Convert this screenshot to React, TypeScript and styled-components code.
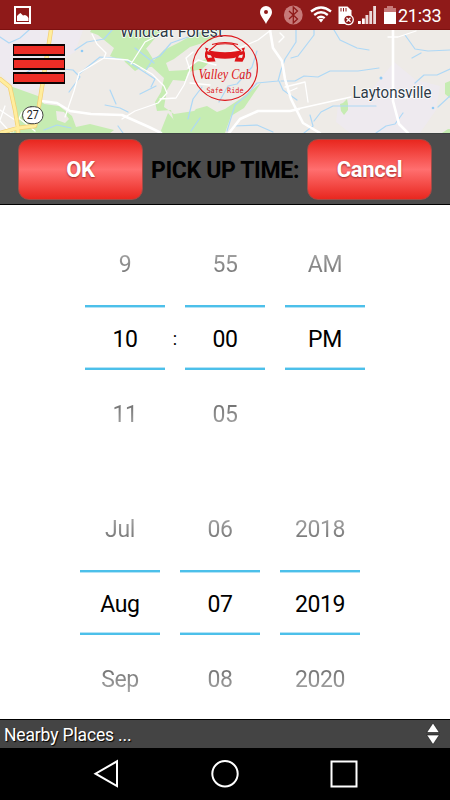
import React from 'react';
import styled, { createGlobalStyle } from 'styled-components';

const GlobalStyle = createGlobalStyle`
    * {
        box-sizing: border-box;
    }
    body {
        margin: 0;
        background: #fff;
        font-family: Roboto, "Noto Sans", sans-serif;
    }
`;

const Screen = styled.div`
    display: flex;
    flex-direction: column;
    width: 450px;
    height: 800px;
    overflow: hidden;
    background: #fff;
`;

const StatusBar = styled.div`
    display: flex;
    flex: none;
    justify-content: space-between;
    height: 30px;
    background: #8f1a19;
    border-bottom: 1px solid #7d1110;
`;

const StatusIcons = styled.div`
    display: flex;
    width: 200px;
`;

const Clock = styled.span`
    width: 52px;
    margin-left: -2px;
    color: #fff;
    font-size: 18px;
    line-height: 31px;
    letter-spacing: -0.3px;
    white-space: nowrap;
`;

const MapArea = styled.div`
    position: relative;
    flex: none;
    height: 103px;
    overflow: hidden;
    & > svg {
        display: block;
    }
`;

const MenuButton = styled.button`
    position: absolute;
    top: 14px;
    left: 13px;
    display: flex;
    flex-direction: column;
    gap: 2px;
    width: 52px;
    padding: 0;
    border: 0;
    background: none;
`;

const MenuBar = styled.span`
    height: 12px;
    background: #ee2d26;
    border: solid #0c0303;
    border-width: 2px 1px;
`;

const Logo = styled.svg`
    position: absolute;
    top: 4px;
    left: 191px;
`;

const Toolbar = styled.div`
    display: flex;
    flex: none;
    align-items: center;
    justify-content: space-between;
    height: 72px;
    padding: 0 18px;
    background: #4c4c4c;
    border-top: 1px solid #3e4242;
    border-bottom: 1px solid #000;
`;

const ToolbarButton = styled.button`
    width: 125px;
    height: 61px;
    padding: 1px 0 0;
    border: 1px solid #a34a45;
    border-radius: 11px;
    background: linear-gradient(#e9271f, #ff6f6f 50%, #e9271f);
    color: #fff;
    font: bold 22px Roboto, sans-serif;
    letter-spacing: -0.4px;
    text-shadow: 0 1px 2px rgba(90, 0, 0, 0.55);
`;

const Title = styled.h1`
    margin: 0;
    padding-top: 3px;
    color: #000;
    font-size: 23px;
    font-weight: bold;
    line-height: 30px;
    white-space: nowrap;
    letter-spacing: -0.35px;
`;

const Pickers = styled.div`
    flex: 1;
    padding-top: 21px;
`;

const PickerRow = styled.div<{ $left: number; $after?: number }>`
    display: flex;
    height: 225px;
    margin-bottom: ${p => p.$after || 0}px;
    padding-left: ${p => p.$left}px;
`;

const Wheel = styled.div`
    width: 80px;
    font-size: 23px;
    letter-spacing: -0.4px;
    text-align: center;
`;

const Option = styled.div<{ $fade: 'up' | 'down' }>`
    height: 79px;
    line-height: ${p => p.$fade === 'up' ? 77 : 89}px;
    color: transparent;
    background: ${p => p.$fade === 'up'
        ? 'linear-gradient(#fff 0, #aaa 30%, #707070 65%, #444)'
        : 'linear-gradient(#444, #707070 42%, #aaa 74%, #fff)'};
    background-clip: text;
    -webkit-background-clip: text;
`;

const Selected = styled.div`
    height: 65px;
    background: linear-gradient(#4cc0ea 2px, #b4e3f6 2px, #b4e3f6 3px, #fff 3px, #fff 62px, #b4e3f6 62px, #b4e3f6 63px, #4cc0ea 63px);
    line-height: 69px;
    color: #000;
`;

const Separator = styled.div`
    width: 20px;
    padding-top: 100px;
    font-size: 18px;
    line-height: 26px;
    text-align: center;
`;

const PlacesBar = styled.div`
    display: flex;
    flex: none;
    align-items: center;
    justify-content: space-between;
    height: 29px;
    padding: 2px 10px 0 4px;
    border-top: 1px solid #000;
    background: #444;
    color: #fff;
    font-size: 17.5px;
    letter-spacing: -0.15px;
    text-shadow: 1px 1px 1px #000;
    & > svg {
        margin-bottom: 2px;
    }
`;

const NavBar = styled.div`
    display: flex;
    flex: none;
    height: 52px;
    background: #000;
`;

interface WheelProps {
    before: string;
    value: string;
    after?: string;
}

const WheelPicker: React.FC<WheelProps> = ({ before, value, after }) => (
    <Wheel>
        <Option $fade="up">{before}</Option>
        <Selected>{value}</Selected>
        <Option $fade="down">{after}</Option>
    </Wheel>
)

const RoadMap = () => (
    <svg width="450" height="103" viewBox="0 30 450 103" fill="none" strokeLinecap="round" strokeLinejoin="round">
        <path fill="#eeebe7" d="M0 30h450v103H0z"/>
        <path fill="#eeeaf0" d="M0 30h83l-8 22-24 14-12 22-20 6L0 72z"/>
        <path fill="#eeeaef" d="M394 62l22 18 24 6-4 24-16 23h-70l-14-11 2-17 34-16z"/>
        <g fill="#c6ecb2">
            <path d="M91 30h51l-4 9 10 12 8 13-8 4-2 4-8-8-12-4-8-1-8-3 4-8-16-13-8-3z"/>
            <path d="M142 30h20l-17 20-7-7z"/>
            <path d="M128 60l22 4 14-14 16-8 14-8 12-4h14l-8 10-22 7-16 12-8 4 3 8 18-1 10-8 12-4 2 3-9 8-14 3-3 9-12-1-6 10-3 17 10 7 20-3 12 8-1 7h-30l-4-16-14 1-2-9 6-10 3-14-12-11-8-1-9 5-10-9-2-4 6-1z"/>
            <path d="M10 86l28 10 6 8 15 2 13 10 4 11 14-3 24 6-4 3H0l16-5-1-13z"/>
            <path d="M261 83l-21 16-15 10-8 3-10-6-11 3-9 10-13 1-6-7-8 20h65l6-17 13-8z"/>
            <path d="M343 103l4-4 1 5 0 6-4 5-3-4-1-7z"/>
            <path d="M445 83l5-2v17l-5-4z"/>
            <path d="M442 133l6-4h2v4z"/>
        </g>
        <path fill="#eeebe7" d="M56 111l8 1 5 7-4 4-8-3zM133 133l8-7 12 3 5 4z"/>
        <g stroke="#aed8f6" strokeWidth="1.2">
            <path d="M0 37l9 6 11-5 9-8M75 50l12-8 17-3 8-9M24 74l8-5 30 0 11 1 7 7-11 15"/>
            <path d="M79 74l11-9 10-8 14 1 12 2 12 8 17 11-4 8M146 70l7-11 7-3 11-13 20-7 30-6M135 48l19 15M105 105l15 3 8 4M110 90l6 14M140 94l16-8"/>
            <path d="M44 130l13-5 14 3M200 118l-9 13M188 119l5-20 9-12M118 126l5 7M257 51l-5 16-15 17-9 2-9 16"/>
            <path d="M296 30l0 12-11 17-4 11-3 11-21 2-11 13-11 9-8 26M314 30v5l-16 21-7 2M334 30l6 10 17 8 12 2M279 81l4 9 14 10M281 81l14 0 9-5 14 1 12-6 28 0 21-3M405 35l10 14 13 2 22-1M412 58l9-5"/>
            <path d="M415 83l9-8h13l13-6M438 107l12-11M234 126l23-1 16 7M304 133l9-7-3-11M314 121l7-9 12-6 43 0M376 133l10-7 9-2 8-11"/>
        </g>
        <g fill="#8fcaf5">
            <circle cx="82" cy="51" r="1.3"/>
            <circle cx="381" cy="78" r="1.5"/>
            <circle cx="433" cy="108" r="1.3"/>
        </g>
        <g stroke="#fff" strokeWidth="1.3">
            <path d="M65 117l9-26 5-18 25-15 2-5-9-9-5-10M104 58l24 2 24 14 12 12 3 7-9 10-23 8-13 8M131 64l14-22 16-8M160 99l16-1 8-13 6-15-4-12 7-6M190 83l20 2M188 68l10-8 18 5M0 110l15 10M0 121l11 12M5 106L0 120M22 112l-9 20M20 119l15 12"/>
            <path d="M230 52l28-12 13-10M280 33l4 4-5 5M297 109l54-12M285 87l20-5 3 20M288 92l9-4M428 94l-23 4M388 37h10l18-6"/>
        </g>
        <g stroke="#fff">
            <path strokeWidth="2.6" d="M41 101l16 2 13 8 21 3 31 1 27 12 12 6M270 30l3 18 9 13 3 18 6 20 12 24 17 10M393 30v71l6 23 9 9M229 133l11-14 18-8 32 0 9-2"/>
        </g>
        <path stroke="#f3ce72" strokeWidth="4.4" d="M51 30L39 106M0 79l10 8 5 23 3 18 0 5M39 110l-4 16-17 2-18 5"/>
        <path stroke="#ffed9d" strokeWidth="3" d="M51 30L39 106M0 79l10 8 5 23 3 18 0 5M39 110l-4 16-17 2-18 5"/>
        <rect x="22.5" y="106.7" width="20.5" height="17" rx="8.5" fill="#fff" stroke="#444" strokeWidth="1"/>
        <text x="32.7" y="119.3" fill="#222" fontSize="12" textAnchor="middle" textLength="12" lengthAdjust="spacingAndGlyphs">27</text>
        <g fill="#2e3a46" stroke="#fff" strokeWidth="1.6" paintOrder="stroke">
            <text x="120" y="37" fontSize="17" textLength="103" lengthAdjust="spacingAndGlyphs">Wildcat Forest</text>
            <text x="352.5" y="98.3" fontSize="16" textLength="79" lengthAdjust="spacingAndGlyphs">Laytonsville</text>
        </g>
    </svg>
)

const CabLogo = () => (
    <Logo width="68" height="68" viewBox="191 34 68 68" fill="none">
        <circle cx="225" cy="68" r="32.4" stroke="#dd1519" strokeWidth="1.1"/>
        <path stroke="#dd1519" strokeWidth="1.1" d="M209 51l7.500-6.500q9-1.500 17 0l7.500 6.500M212 44.500q13-4 26 0"/>
        <g fill="#dd1519">
            <path d="M209 50.500l6 1q10 1.500 20 0l6-1-2.500 6-4.500 1.500q-9 1.500-18 0l-4.500-1.500z"/>
            <path fillRule="evenodd" d="M205 47.500l3.500 1-1.500 2.500 5.500 1.500 3 9-8 .2-2.500-4.700q-.8-4 1-6.500zM207 54.500l1 3.500 4-.5-.5-2z"/>
            <path fillRule="evenodd" d="M245 47.500l-3.500 1 1.500 2.500-5.500 1.500-3 9 8 .2 2.500-4.700q.8-4-1-6.500zM243 54.500l-1 3.500-4-.5.5-2z"/>
        </g>
        <text x="198.500" y="79" fill="#dd1519" fontFamily="'Liberation Serif', serif" fontStyle="italic" fontSize="14" textLength="53" lengthAdjust="spacingAndGlyphs">Valley Cab</text>
        <text x="206.500" y="92.500" fill="#dd1519" fontFamily="'DejaVu Sans Mono', monospace" fontSize="7.500" textLength="37" lengthAdjust="spacingAndGlyphs">Safe Ride</text>
    </Logo>
)

const PictureIcon = () => (
    <svg width="34" height="29" viewBox="0 0 34 29">
        <path fill="none" stroke="#fff" strokeWidth="2" d="M15 7h15v16H15z"/>
        <path fill="#fff" d="M17 21v-5l2-2 1.500-1 1.500 1.500 1 1 2-.5 2 1 1.500 2v3z"/>
    </svg>
)

const SignalIcons = () => (
    <svg width="150" height="29" viewBox="250 0 150 29" style={{ flex: 'none' }}>
        <path fill="#fff" fillRule="evenodd" d="M266 6a6 6 0 0 1 6 6c0 4-4 7.500-6 12-2-4.500-6-8-6-12a6 6 0 0 1 6-6zm0 4a2 2 0 1 0 0 4 2 2 0 0 0 0-4z"/>
        <circle cx="293.300" cy="15" r="9.400" fill="#c77a79"/>
        <path fill="none" stroke="#8f1a19" strokeWidth="1.300" d="M289 11l8.500 8-4.200 4V7l4.200 4-8.500 8"/>
        <g fill="none" stroke="#fff" strokeWidth="2.300">
            <path d="M311 11.500q10-8 20 0M314.200 15q6.800-5.500 13.600 0M317.300 18.200q3.700-3 7.400 0"/>
        </g>
        <path fill="#fff" d="M318.500 19.500q2.500-1.500 5 0L321 22.500z"/>
        <path fill="#fff" d="M338.500 6.500h9l4 4V24h-13z"/>
        <path stroke="#8f1a19" strokeWidth="1" d="M341 8v3.500M343.500 8v3.500M346 8v3.500"/>
        <circle cx="348.500" cy="19.800" r="4.800" fill="#8f1a19" stroke="#fff" strokeWidth="1.300"/>
        <path stroke="#fff" strokeWidth="1.300" d="M346.500 17.800l4 4M350.500 17.800l-4 4"/>
        <path fill="#fff" d="M358 21h2.800v3H358zM362 18.500h2.800V24H362z"/>
        <path fill="#ecdada" d="M365.500 15h2.800v9h-2.800zM369.300 11h2.800v13h-2.800zM373.200 6h2.800v18h-2.800z"/>
        <path fill="#c77a79" d="M387 6h6v2h3v4h-12V8h3z"/>
        <path fill="#fff" d="M384 12h12v12h-12z"/>
    </svg>
)

const App: React.FC = () => {
    return (
        <Screen>
            <GlobalStyle/>
            <StatusBar>
                <PictureIcon/>
                <StatusIcons>
                    <SignalIcons/>
                    <Clock>21:33</Clock>
                </StatusIcons>
            </StatusBar>

            <MapArea>
                <RoadMap/>
                <MenuButton aria-label="Menu">
                    <MenuBar/>
                    <MenuBar/>
                    <MenuBar/>
                </MenuButton>
                <CabLogo/>
            </MapArea>

            <Toolbar>
                <ToolbarButton>OK</ToolbarButton>
                <Title>PICK UP TIME:</Title>
                <ToolbarButton>Cancel</ToolbarButton>
            </Toolbar>

            <Pickers>
                <PickerRow $left={85} $after={40}>
                    <WheelPicker before="9" value="10" after="11"/>
                    <Separator>:</Separator>
                    <WheelPicker before="55" value="00" after="05"/>
                    <Separator/>
                    <WheelPicker before="AM" value="PM"/>
                </PickerRow>
                <PickerRow $left={80}>
                    <WheelPicker before="Jul" value="Aug" after="Sep"/>
                    <Separator/>
                    <WheelPicker before="06" value="07" after="08"/>
                    <Separator/>
                    <WheelPicker before="2018" value="2019" after="2020"/>
                </PickerRow>
            </Pickers>

            <PlacesBar>
                <span>Nearby Places ...</span>
                <svg width="14" height="22" viewBox="0 0 14 22">
                    <path fill="#fff" stroke="#111" strokeWidth="0.600" d="M7 0l6.300 9.500H.7zM7 21.500L.7 12h12.600z"/>
                </svg>
            </PlacesBar>

            <NavBar>
                <svg width="450" height="52" viewBox="0 748 450 52" fill="none" stroke="#fff" strokeWidth="2">
                    <path d="M117 761.300v24.800L95.500 773.700z"/>
                    <circle cx="225" cy="773.700" r="12.700"/>
                    <path d="M331.500 761.500h25v25h-25z"/>
                </svg>
            </NavBar>
        </Screen>
    )
}

export default App
